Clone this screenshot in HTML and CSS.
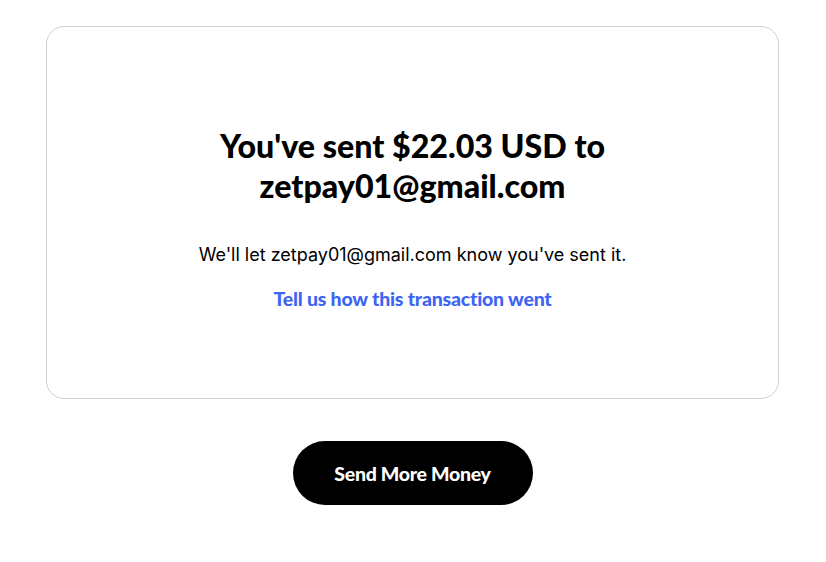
FILE: index.html
```html
<!DOCTYPE html>
<html>
<head>
<meta charset="utf-8">
<link rel="stylesheet" href="styles.css">
</head>
<body>
<main class="page">
  <section class="card">
    <h1 class="title">You've sent $22.03 USD to zetpay01@gmail.com</h1>
    <p class="note">We'll let zetpay01@gmail.com know you've sent it.</p>
    <a class="feedback" href="#">Tell us how this transaction went</a>
  </section>
  <div class="actions">
    <button class="primary">Send More Money</button>
  </div>
</main>
</body>
</html>
```

FILE: styles.css
```css
html, body {
  margin: 0;
  padding: 0;
  background: #ffffff;
}
body {
  font-family: Lato, "Liberation Sans", sans-serif;
  color: #000;
}
.page {
  padding: 26px 47px 0 46px;
}
.card {
  box-sizing: border-box;
  height: 373px;
  border: 1px solid #cfcfcf;
  border-radius: 18px;
  display: flex;
  flex-direction: column;
  align-items: center;
  justify-content: center;
  padding: 12px 40px 0;
  text-align: center;
}
.title {
  margin: 0;
  font-size: 32.2px;
  line-height: 40px;
  font-weight: 900;
  max-width: 440px;
  letter-spacing: 0;
}
.note {
  margin: 37px 0 0;
  font-family: Inter, "Liberation Sans", sans-serif;
  font-size: 18px;
  line-height: 24px;
}
.feedback {
  margin-top: 20px;
  font-size: 19.5px;
  line-height: 24px;
  font-weight: 900;
  color: #3d65f2;
  text-decoration: none;
  letter-spacing: -0.2px;
}
.actions {
  display: flex;
  justify-content: center;
  margin-top: 42px;
}
.primary {
  width: 240px;
  height: 64px;
  border: none;
  border-radius: 32px;
  background: #000;
  color: #fff;
  font-family: Lato, sans-serif;
  font-size: 19.5px;
  font-weight: 900;
  letter-spacing: -0.3px;
}
```
